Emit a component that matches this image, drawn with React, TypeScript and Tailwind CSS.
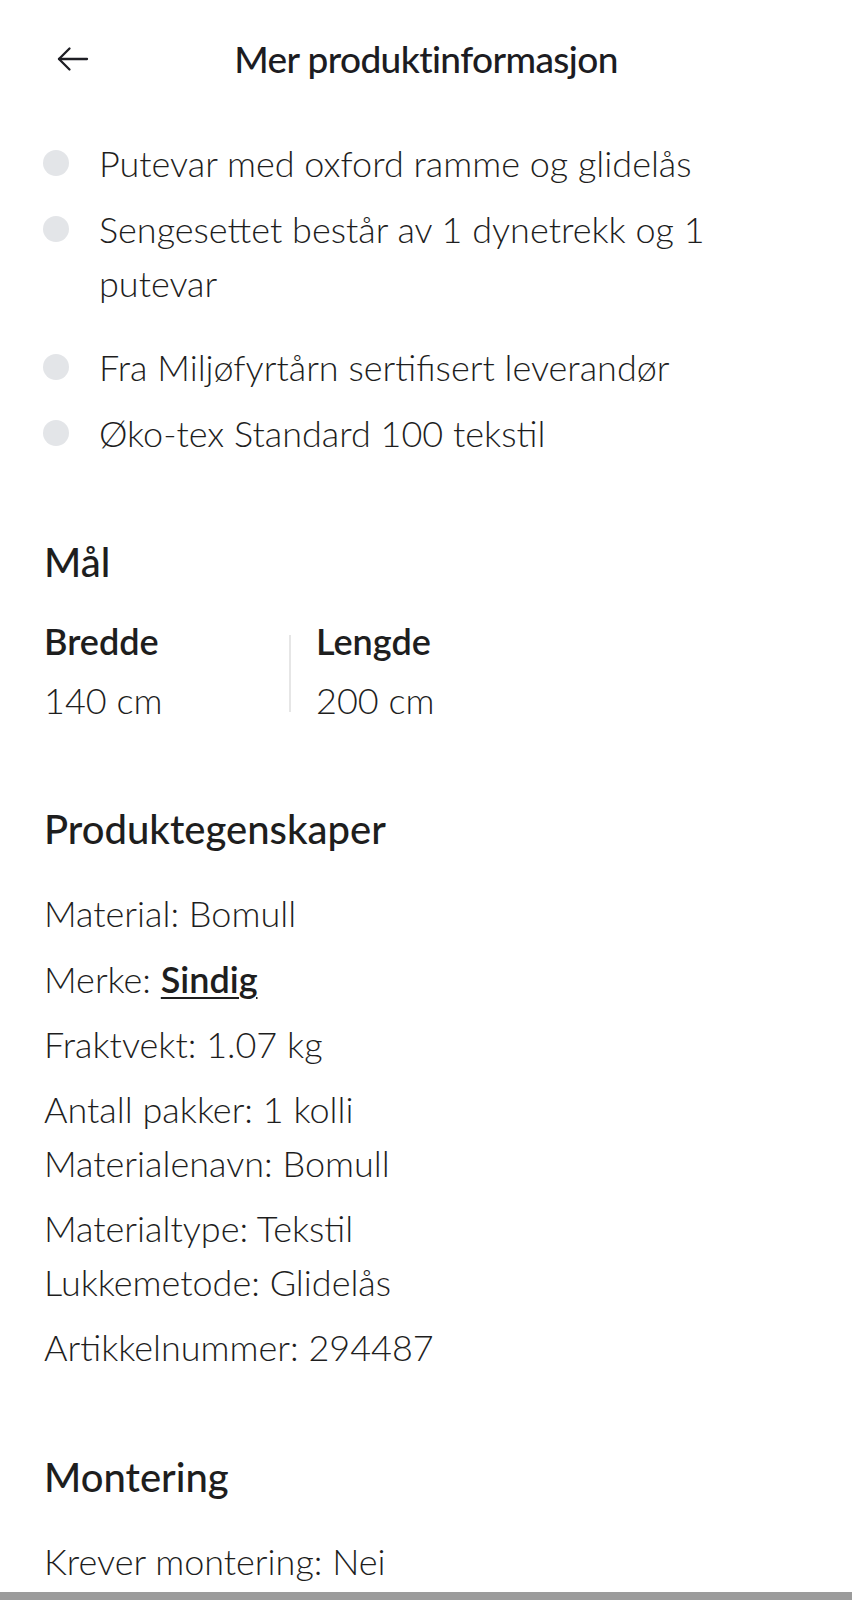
import React from "react";

const font = { fontFamily: "Lato, 'Noto Sans', sans-serif" };

function Bullet({ children, className = "" }: { children: React.ReactNode; className?: string }) {
  return (
    <li className={`flex items-start ${className}`}>
      <span className="mt-[14px] ml-[-1px] h-[26px] w-[26px] shrink-0 rounded-full bg-[#e3e5e8]" />
      <span className="ml-[30px] text-[36px] leading-[54px] font-light text-[#1e1e1e]">{children}</span>
    </li>
  );
}

export default function App() {
  return (
    <div className="flex h-[1600px] w-[852px] flex-col overflow-hidden bg-white" style={font}>
      <header className="relative flex h-[118px] items-center justify-center">
        <button className="absolute left-[57px] top-[46px] flex h-[26px] w-[32px] items-center justify-center text-[#1e1e24]">
          <svg width="32" height="26" viewBox="0 0 32 26" fill="none" stroke="currentColor" strokeWidth="2.3" strokeLinecap="round" strokeLinejoin="round">
            <path d="M30 13H2" />
            <path d="M12.5 2.5L2 13L12.5 23.5" />
          </svg>
        </button>
        <h1 className="text-[37px] font-medium tracking-[-0.6px] text-[#1c1c22]">Mer produktinformasjon</h1>
      </header>

      <main className="flex flex-col px-[44px]">
        <ul className="mt-[18px] flex flex-col">
          <Bullet>Putevar med oxford ramme og glidelås</Bullet>
          <Bullet className="mt-[12px]">Sengesettet består av 1 dynetrekk og 1 putevar</Bullet>
          <Bullet className="mt-[30px]">Fra Miljøfyrtårn sertifisert leverandør</Bullet>
          <Bullet className="mt-[12px]">Øko-tex Standard 100 tekstil</Bullet>
        </ul>

        <h2 className="mt-[78px] text-[40px] leading-[48px] font-medium text-[#1e1e1e]">Mål</h2>
        <div className="mt-[28px] flex">
          <div className="w-[245px]">
            <div className="text-[36px] leading-[54px] font-semibold text-[#1e1e1e]">Bredde</div>
            <div className="mt-[5px] text-[36px] leading-[54px] font-light text-[#1e1e1e]">140 cm</div>
          </div>
          <div className="mt-[21px] h-[77px] w-[2px] bg-[#e6e6e6]" />
          <div className="pl-[25px]">
            <div className="text-[36px] leading-[54px] font-semibold text-[#1e1e1e]">Lengde</div>
            <div className="mt-[5px] text-[36px] leading-[54px] font-light text-[#1e1e1e]">200 cm</div>
          </div>
        </div>

        <h2 className="mt-[78px] text-[40px] leading-[48px] font-medium text-[#1e1e1e]">Produktegenskaper</h2>
        <div className="mt-[33px] flex flex-col text-[36px] leading-[54px] font-light text-[#1e1e1e]">
          <p>Material: Bomull</p>
          <p className="mt-[12px]">
            Merke: <a className="font-semibold underline underline-offset-[4px] decoration-[2px]">Sindig</a>
          </p>
          <p className="mt-[11px]">Fraktvekt: 1.07 kg</p>
          <p className="mt-[11px]">Antall pakker: 1 kolli</p>
          <p>Materialenavn: Bomull</p>
          <p className="mt-[11px]">Materialtype: Tekstil</p>
          <p>Lukkemetode: Glidelås</p>
          <p className="mt-[11px]">Artikkelnummer: 294487</p>
        </div>

        <h2 className="mt-[79px] text-[40px] leading-[48px] font-medium text-[#1e1e1e]">Montering</h2>
        <p className="mt-[33px] text-[36px] leading-[54px] font-light text-[#1e1e1e]">Krever montering: Nei</p>
      </main>

      <div className="mt-auto h-[8px] w-full bg-[#9b9b9b]" />
    </div>
  );
}
